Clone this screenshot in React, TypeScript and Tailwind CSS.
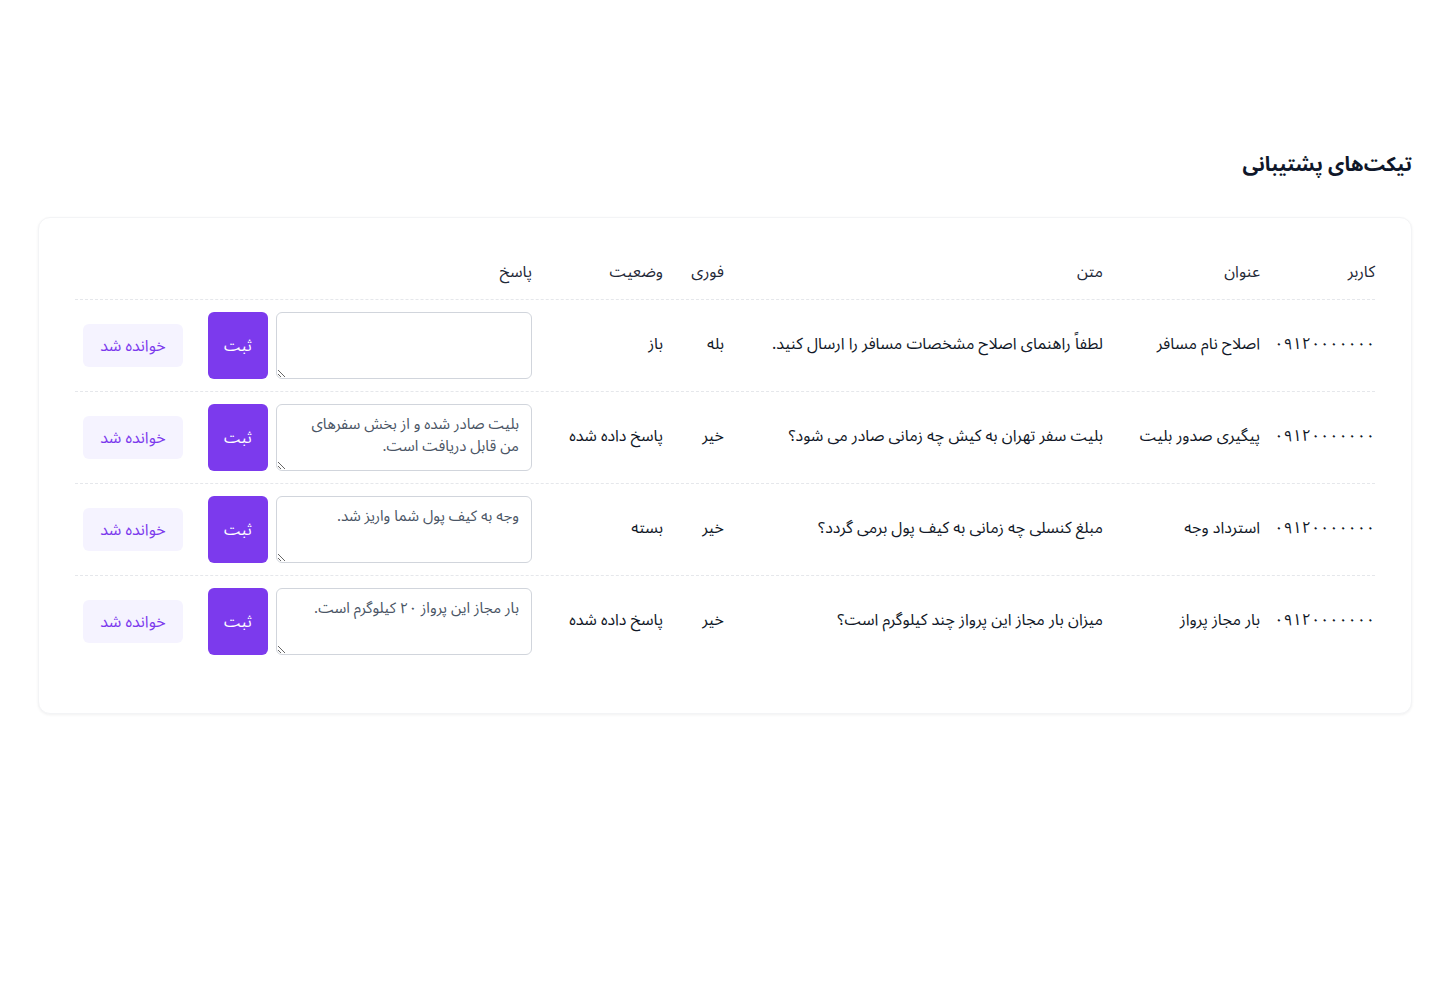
const tickets = [
  {
    user: '۰۹۱۲۰۰۰۰۰۰۰',
    title: 'اصلاح نام مسافر',
    body: 'لطفاً راهنمای اصلاح مشخصات مسافر را ارسال کنید.',
    urgent: 'بله',
    status: 'باز',
    reply: '',
  },
  {
    user: '۰۹۱۲۰۰۰۰۰۰۰',
    title: 'پیگیری صدور بلیت',
    body: 'بلیت سفر تهران به کیش چه زمانی صادر می شود؟',
    urgent: 'خیر',
    status: 'پاسخ داده شده',
    reply: 'بلیت صادر شده و از بخش سفرهای من قابل دریافت است.',
  },
  {
    user: '۰۹۱۲۰۰۰۰۰۰۰',
    title: 'استرداد وجه',
    body: 'مبلغ کنسلی چه زمانی به کیف پول برمی گردد؟',
    urgent: 'خیر',
    status: 'بسته',
    reply: 'وجه به کیف پول شما واریز شد.',
  },
  {
    user: '۰۹۱۲۰۰۰۰۰۰۰',
    title: 'بار مجاز پرواز',
    body: 'میزان بار مجاز این پرواز چند کیلوگرم است؟',
    urgent: 'خیر',
    status: 'پاسخ داده شده',
    reply: 'بار مجاز این پرواز ۲۰ کیلوگرم است.',
  },
];

const cols = 'grid grid-cols-[115px_157px_379px_61px_131px_349px_1fr]';

export default function App() {
  return (
    <div
      dir="rtl"
      className="min-h-screen bg-white pt-[146px] pr-[28px] pl-[38px] text-[#111827]"
      style={{ fontFamily: '"Noto Sans Arabic", "DejaVu Sans", sans-serif' }}
    >
      {/* Title */}
      <h1 className="text-[20px] font-bold text-[#0f172a] leading-[38px]">تیکت‌های پشتیبانی</h1>

      {/* Card */}
      <div className="mt-[33px] rounded-xl border border-gray-100 bg-white px-9 pt-[30px] pb-[46px] shadow-[0_1px_3px_rgba(0,0,0,0.06)]">
        {/* Header */}
        <div className={`${cols} h-[52px] items-center border-b border-dashed border-gray-200 text-[16px] text-[#1f2937]`}>
          <div className="mb-1">کاربر</div>
          <div className="mb-1">عنوان</div>
          <div className="mb-1">متن</div>
          <div className="mb-1">فوری</div>
          <div className="mb-1">وضعیت</div>
          <div className="mb-1">پاسخ</div>
          <div></div>
        </div>

        {/* Rows */}
        {tickets.map((t, i) => (
          <div
            key={i}
            className={`${cols} items-center py-3 text-[16px] ${i < tickets.length - 1 ? 'border-b border-dashed border-gray-200' : ''}`}
          >
            <div className="mb-1">{t.user}</div>
            <div className="mb-1">{t.title}</div>
            <div className="mb-1">{t.body}</div>
            <div className="mb-1">{t.urgent}</div>
            <div className="mb-1">{t.status}</div>
            <div className="flex items-stretch gap-2">
              <textarea
                defaultValue={t.reply}
                className="h-[67px] w-[256px] rounded-md border border-gray-300 px-3 py-2 text-[15px] leading-[22px] text-gray-600 outline-none"
              />
              <button className="w-[60px] rounded-md bg-[#7c3aed] text-[16px] text-white">ثبت</button>
            </div>
            <div className="flex">
              <button className="h-[43px] w-[100px] rounded-md bg-[#f5f3ff] text-[16px] text-[#7c3aed]">خوانده شد</button>
            </div>
          </div>
        ))}
      </div>
    </div>
  );
}
